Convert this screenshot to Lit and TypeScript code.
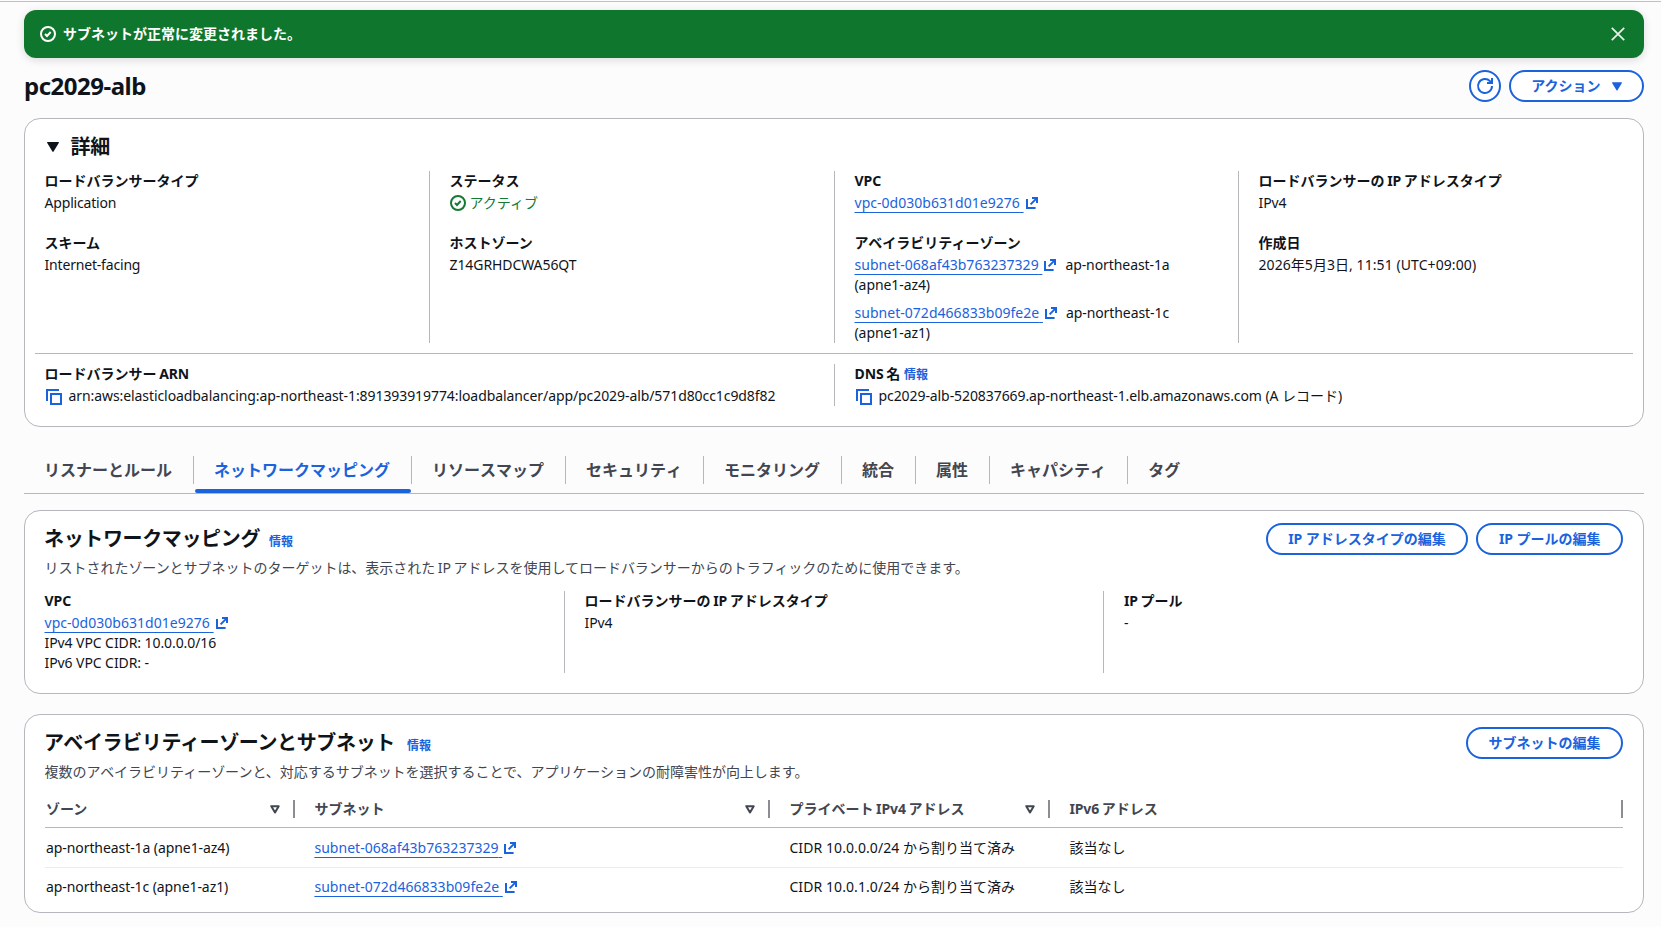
import { LitElement, html, svg, css } from "lit";
import { customElement, state } from "lit/decorators.js";
import { classMap } from "lit/directives/class-map.js";

const l = (text: string, variant = "") => html`<span class="latin ${variant}">${text}</span>`;

const checkIcon = html`<svg class="icon" viewBox="0 0 16 16" fill="none" stroke="currentColor" stroke-width="2">
  <circle cx="8" cy="8" r="7"></circle><path d="m5 8 2 2 3.7-4"></path></svg>`;
const externalIcon = html`<svg class="ext" viewBox="0 0 12 12" fill="none" stroke="currentColor" stroke-width="2">
  <path d="M1 2v9h8.6M6 1h5v5M10.6 1.4 4.6 7.4"></path></svg>`;
const copyIcon = html`<svg class="icon" viewBox="0 0 16 16" fill="none" stroke="currentColor" stroke-width="2">
  <path d="M1 12V1h12"></path><path d="M5 5h10v10H5z"></path></svg>`;
const closeIcon = html`<svg class="icon" viewBox="0 0 16 16" fill="none" stroke="currentColor" stroke-width="1.8">
  <path d="m1.8 1.8 12.4 12.4M14.2 1.8 1.8 14.2"></path></svg>`;
const refreshIcon = html`<svg class="icon" viewBox="0 0 16 16" fill="none" stroke="currentColor" stroke-width="2">
  <path d="M15 8a7 7 0 1 1-2-4.9L14.6 5"></path><path d="M10 5h5V0"></path></svg>`;
const caret = (cls: string) => html`<svg class=${cls} viewBox="0 0 12 10">${svg`<path fill="currentColor" d="M.6 0h10.8c.5 0 .7.5.5.8L6.6 9.5c-.3.5-.9.5-1.2 0L.1.8C-.1.5.1 0 .6 0z"></path>`}</svg>`;
const sortIcon = html`<svg class="sort" viewBox="0 0 10 9" fill="none" stroke="currentColor" stroke-width="2" stroke-linejoin="round">
  <path d="M1.3 1.2h7.4L5 7.4z"></path></svg>`;

const link = (text: string) => html`<a class="link"><span class="under">${text}&nbsp;</span>${externalIcon}</a>`;
const info = html`<a class="info">情報</a>`;

const TABS = ["リスナーとルール", "ネットワークマッピング", "リソースマップ", "セキュリティ", "モニタリング", "統合", "属性", "キャパシティ", "タグ"];

const ROWS = [
  { zone: "ap-northeast-1a (apne1-az4)", subnet: "subnet-068af43b763237329", cidr: "CIDR 10.0.0.0/24" },
  { zone: "ap-northeast-1c (apne1-az1)", subnet: "subnet-072d466833b09fe2e", cidr: "CIDR 10.0.1.0/24" },
];

@customElement("app-root")
export class AppRoot extends LitElement {
  @state() private tab = 1;

  static styles = css`
    * { box-sizing: border-box; margin: 0; }
    :host {
      display: block; height: 927px; overflow: hidden; background: #fcfcfd; color: #0f141a;
      font: 400 14px/20px "Noto Sans", "Noto Sans CJK JP", sans-serif;
    }
    .latin { letter-spacing: -0.08px; }
    .latin.tight { letter-spacing: -0.18px; }
    .latin.wide { letter-spacing: 0.08px; }
    .top { height: 2px; border-bottom: 1px solid #bfbfc5; }
    .page { padding: 8px 17px 0 24px; }
    .icon { width: 16px; height: 16px; display: block; flex: none; overflow: visible; }
    .ext { width: 12px; height: 12px; margin-left: 2px; vertical-align: -1px; }

    .flash {
      display: flex; align-items: center; height: 48px; padding: 0 17px 0 16px; border-radius: 12px;
      background: #0f762d; color: #fff; font-weight: 700; box-shadow: 0 2px 8px rgba(0, 7, 22, .14);
    }
    .flash .msg { flex: 1; margin-left: 7px; padding-bottom: 1px; }
    .flash .close { color: #e6f0e8; padding: 1px; }

    .title { display: flex; align-items: center; height: 32px; margin: 12px 0 16px; gap: 8px; }
    h1 { flex: 1; font-size: 24px; line-height: 30px; font-weight: 700; letter-spacing: -0.5px; }
    .btn {
      display: flex; align-items: center; height: 32px; padding: 0 20.5px; border: 2px solid #1b62dd;
      border-radius: 16px; background: #fff; color: #1b62dd; font-weight: 700; white-space: nowrap;
    }
    .btn.round { width: 32px; padding: 0; justify-content: center; }
    .btn .caret { width: 10px; height: 9px; margin-left: 11px; }

    .card { border: 1px solid #b6b6bd; border-radius: 16px; background: #fff; padding: 0 20px 0 19.5px; }
    .details { height: 309px; }
    .summary { display: flex; align-items: center; height: 52px; padding: 3px 0 0 2.5px; gap: 12px; }
    .summary .caret { width: 12px; height: 10px; }
    h2 { font-size: 20px; line-height: 24px; font-weight: 700; letter-spacing: -0.36px; margin-left: -0.5px; }

    .kv { display: grid; column-gap: 40px; }
    .four { grid-template-columns: 365px 365px 364px 1fr; }
    .three { grid-template-columns: 500px 499.5px 1fr; margin-top: 12px; height: 82px; }
    .two { grid-template-columns: 770px 1fr; }
    .col + .col { margin-left: -21px; padding-left: 20px; border-left: 1px solid #b6b6bd; }
    .item + .item { margin-top: 20px; }
    .label { font-weight: 700; height: 20px; margin-bottom: 2px; white-space: nowrap; word-spacing: -1px; }
    .label .info { margin-left: 1px; }
    .line { height: 20px; white-space: nowrap; }
    .line + .pair { margin-top: 8px; }
    .zone { margin-left: 9px; }
    .flexline { display: flex; align-items: center; height: 20px; }
    .status { color: #137a33; gap: 4px; }
    .copy { color: #1b62dd; padding: 1px 7px 0 1px; }
    .rule { height: 1px; background: #b6b6bd; margin: 10px -10px; }

    .link, .info { color: #1b62dd; }
    .under { letter-spacing: 0.03px; text-decoration: underline 1px; text-underline-offset: 4px; text-decoration-skip-ink: none; }
    .info { font-size: 12px; font-weight: 700; letter-spacing: 0; }

    .tabs { display: flex; height: 38px; margin: 29px 0 16px; border-bottom: 1px solid #b6b6bd; font-kerning: none; }
    .tab { position: relative; font-size: 16px; font-weight: 700; color: #424650; white-space: nowrap; }
    .tab span { display: block; height: 28px; line-height: 28px; padding: 0 21px 0 20px; border-right: 1px solid #b6b6bd; }
    .tab:last-child span { border-color: transparent; }
    .tab.active { color: #1b62dd; }
    .tab.active::after {
      content: ""; position: absolute; left: 1px; right: 1px; bottom: 0; height: 4px;
      border-radius: 2px; background: #1b62dd;
    }

    .mapping { height: 184px; margin-bottom: 20px; }
    .zones { height: 199px; }
    .head { display: flex; align-items: center; height: 32px; margin-top: 12px; gap: 8px; }
    .head .info { flex: 1; padding-top: 6px; margin-left: 1px; }
    .zones .head .info { margin-left: 4px; }
    .desc { height: 21px; margin-top: 3px; color: #424650; word-spacing: -1px; letter-spacing: -0.02px; }

    .table { margin-top: 8px; margin-left: 0.5px; }
    .tr { display: grid; grid-template-columns: 250px 475px 280px 1fr; align-items: center; height: 40px; border-bottom: 1px solid #ebebf0; }
    .tr:last-child { height: 39px; border-color: transparent; }
    .tr > * { padding-left: 19.4px; }
    .tr > :first-child { padding-left: 1px; }
    .tr.th { height: 37px; border-color: #b6b6bd; color: #424650; font-weight: 700; word-spacing: -1px; }
    .cell { display: flex; justify-content: space-between; align-items: center; height: 18px; border-right: 2px solid #8c8c94; padding-right: 13px; }
    .sort { width: 10px; height: 9px; }
  `;

  private item(label: unknown, body: unknown) {
    return html`<div class="item"><div class="label">${label}</div>${body}</div>`;
  }

  private zone(subnet: string, name: string, id: string) {
    return html`<div class="pair line">${link(subnet)}<span class="latin zone">${name}</span></div><div class="line">${l(id)}</div>`;
  }

  render() {
    const line = (c: unknown) => html`<div class="line">${c}</div>`;
    const ipType = html`ロードバランサーの ${l("IP")} アドレスタイプ`;
    return html`
      <div class="top"></div>
      <div class="page">
        <div class="flash">${checkIcon}<span class="msg">サブネットが正常に変更されました。</span><span class="close">${closeIcon}</span></div>
        <div class="title">
          <h1>pc2029-alb</h1>
          <div class="btn round">${refreshIcon}</div>
          <div class="btn">アクション${caret("caret")}</div>
        </div>

        <section class="card details">
          <div class="summary">${caret("caret")}<h2>詳細</h2></div>
          <div class="kv four">
            <div class="col">
              ${this.item("ロードバランサータイプ", line(l("Application", "tight")))}
              ${this.item("スキーム", line(l("Internet-facing", "tight")))}
            </div>
            <div class="col">
              ${this.item("ステータス", html`<div class="flexline status">${checkIcon}アクティブ</div>`)}
              ${this.item("ホストゾーン", line(l("Z14GRHDCWA56QT")))}
            </div>
            <div class="col">
              ${this.item(l("VPC"), line(link("vpc-0d030b631d01e9276")))}
              ${this.item("アベイラビリティーゾーン", html`
                ${this.zone("subnet-068af43b763237329", "ap-northeast-1a", "(apne1-az4)")}
                ${this.zone("subnet-072d466833b09fe2e", "ap-northeast-1c", "(apne1-az1)")}`)}
            </div>
            <div class="col">
              ${this.item(ipType, line(l("IPv4")))}
              ${this.item("作成日", line(html`${l("2026", "wide")}年${l("5", "wide")}月${l("3", "wide")}日${l(", 11:51 (UTC+09:00)", "wide")}`))}
            </div>
          </div>
          <div class="rule"></div>
          <div class="kv two">
            <div class="col">
              ${this.item(html`ロードバランサー ${l("ARN")}`, html`<div class="flexline"><span class="copy">${copyIcon}</span>${l("arn:aws:elasticloadbalancing:ap-northeast-1:891393919774:loadbalancer/app/pc2029-alb/571d80cc1c9d8f82")}</div>`)}
            </div>
            <div class="col">
              ${this.item(html`${l("DNS")} 名 ${info}`, html`<div class="flexline"><span class="copy">${copyIcon}</span><span>${l("pc2029-alb-520837669.ap-northeast-1.elb.amazonaws.com (A")} レコード)</span></div>`)}
            </div>
          </div>
        </section>

        <nav class="tabs">
          ${TABS.map((t, i) => html`<div class=${classMap({ tab: true, active: i === this.tab })} @click=${() => (this.tab = i)}><span>${t}</span></div>`)}
        </nav>

        <section class="card mapping">
          <div class="head"><h2>ネットワークマッピング</h2>${info}
            <div class="btn">${l("IP")}&nbsp;アドレスタイプの編集</div>
            <div class="btn">${l("IP")}&nbsp;プールの編集</div>
          </div>
          <div class="desc">リストされたゾーンとサブネットのターゲットは、表示された ${l("IP")} アドレスを使用してロードバランサーからのトラフィックのために使用できます。</div>
          <div class="kv three">
            <div class="col">
              ${this.item(l("VPC"), html`${line(link("vpc-0d030b631d01e9276"))}${line(l("IPv4 VPC CIDR: 10.0.0.0/16"))}${line(l("IPv6 VPC CIDR: -"))}`)}
            </div>
            <div class="col">${this.item(ipType, line(l("IPv4")))}</div>
            <div class="col">${this.item(html`${l("IP")} プール`, line("-"))}</div>
          </div>
        </section>

        <section class="card zones">
          <div class="head"><h2>アベイラビリティーゾーンとサブネット</h2>${info}
            <div class="btn">サブネットの編集</div>
          </div>
          <div class="desc">複数のアベイラビリティーゾーンと、対応するサブネットを選択することで、アプリケーションの耐障害性が向上します。</div>
          <div class="table">
            <div class="tr th">
              <div class="cell">ゾーン${sortIcon}</div>
              <div class="cell">サブネット${sortIcon}</div>
              <div class="cell"><span>プライベート ${l("IPv4")} アドレス</span>${sortIcon}</div>
              <div class="cell"><span>${l("IPv6")} アドレス</span></div>
            </div>
            ${ROWS.map((r) => html`<div class="tr">
              <div>${l(r.zone)}</div>
              <div>${link(r.subnet)}</div>
              <div>${l(r.cidr, "wide")} から割り当て済み</div>
              <div>該当なし</div>
            </div>`)}
          </div>
        </section>
      </div>
    `;
  }
}
